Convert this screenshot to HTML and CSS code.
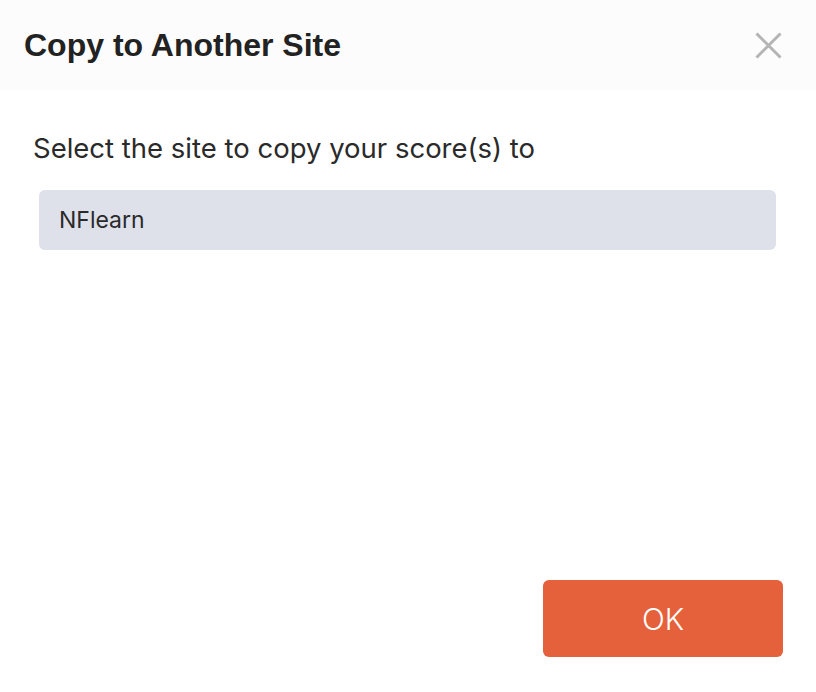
FILE: index.html
```html
<!DOCTYPE html>
<html lang="en">
<head>
<meta charset="utf-8">
<title>Copy to Another Site</title>
<link rel="stylesheet" href="styles.css">
</head>
<body>
<div class="dialog">
  <header class="dialog-header">
    <h1 class="dialog-title">Copy to Another Site</h1>
    <button class="close-btn" aria-label="Close">
      <svg width="27" height="27" viewBox="0 0 27 27"><path d="M1.5 1.5 L25.5 25.5 M25.5 1.5 L1.5 25.5" stroke="#b4b4b4" stroke-width="3" fill="none"/></svg>
    </button>
  </header>
  <main class="dialog-body">
    <p class="prompt">Select the site to copy your score(s) to</p>
    <div class="site-select">NFlearn</div>
  </main>
  <footer class="dialog-footer">
    <button class="ok-btn">OK</button>
  </footer>
</div>
</body>
</html>
```
FILE: styles.css
```css
html, body {
  margin: 0;
  padding: 0;
  background: #ffffff;
}
.dialog {
  width: 816px;
  height: 692px;
  display: flex;
  flex-direction: column;
}
.dialog-header {
  height: 90px;
  background: #fcfcfc;
  display: flex;
  align-items: center;
  justify-content: space-between;
  padding: 0 34px 0 24px;
  box-sizing: border-box;
}
.dialog-title {
  margin: 0;
  font-family: "Liberation Sans", Arial, sans-serif;
  font-weight: 700;
  font-size: 32px;
  color: #222222;
  letter-spacing: 0;
}
.close-btn {
  border: 0;
  background: none;
  padding: 0;
  width: 27px;
  height: 27px;
  display: block;
  cursor: pointer;
}
.close-btn svg { display: block; }
.dialog-body {
  padding: 42px 40px 0 33px;
}
.prompt {
  margin: 0;
  font-family: Inter, "Noto Sans", sans-serif;
  font-size: 27.5px;
  line-height: 33px;
  color: #2a2a2a;
}
.site-select {
  margin: 25px 0 0 6px;
  height: 60px;
  background: #dfe1ea;
  border-radius: 6px;
  display: flex;
  align-items: center;
  padding-left: 20px;
  font-family: Inter, "Noto Sans", sans-serif;
  font-size: 23px;
  color: #2a2a2a;
}
.dialog-footer {
  margin-top: auto;
  display: flex;
  justify-content: flex-end;
  padding: 0 33px 35px 0;
}
.ok-btn {
  width: 240px;
  height: 77px;
  border: 0;
  border-radius: 6px;
  background: #e5613b;
  color: #ffffff;
  font-family: Inter, "Noto Sans", sans-serif;
  font-weight: 300;
  font-size: 30px;
  cursor: pointer;
}
```
